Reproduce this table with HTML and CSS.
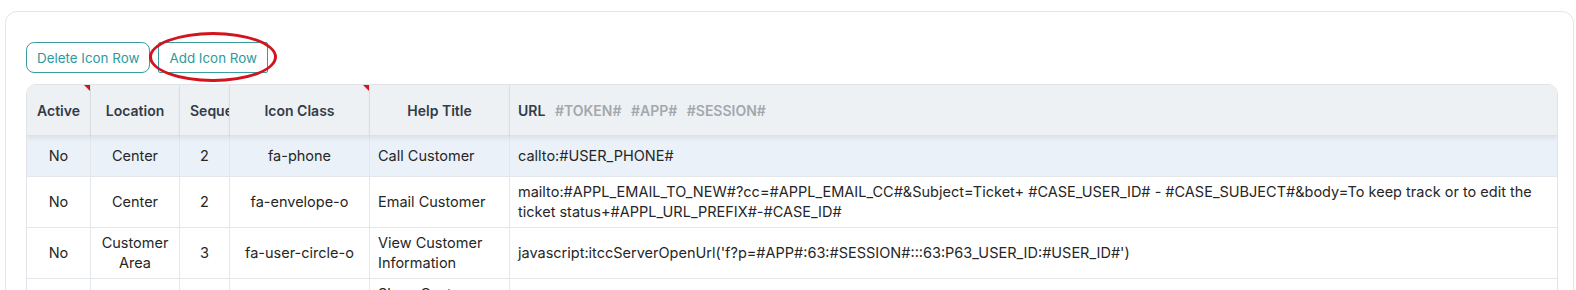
FILE: index.html
```html
<!DOCTYPE html>
<html lang="en">
<head>
<meta charset="utf-8">
<title>Icon Rows</title>
<link rel="stylesheet" href="styles.css">
</head>
<body>
<div class="card">
  <div class="toolbar">
    <button class="btn btn-rounded">Delete Icon Row</button>
    <span class="annotated">
      <button class="btn btn-square">Add Icon Row</button>
      <span class="ring"></span>
    </span>
  </div>
  <div class="grid-wrap">
    <table class="grid">
      <colgroup>
        <col class="c-active">
        <col class="c-loc">
        <col class="c-seq">
        <col class="c-icon">
        <col class="c-help">
        <col class="c-url">
      </colgroup>
      <thead>
        <tr>
          <th class="ctr flag">Active</th>
          <th class="ctr">Location</th>
          <th class="ctr">Sequence</th>
          <th class="ctr flag">Icon Class</th>
          <th class="ctr">Help Title</th>
          <th class="lft">URL <span class="tok">#TOKEN#</span> <span class="tok">#APP#</span> <span class="tok">#SESSION#</span></th>
        </tr>
      </thead>
      <tbody>
        <tr class="sel">
          <td class="ctr">No</td>
          <td class="ctr">Center</td>
          <td class="ctr">2</td>
          <td class="ctr">fa-phone</td>
          <td>Call Customer</td>
          <td>callto:#USER_PHONE#</td>
        </tr>
        <tr>
          <td class="ctr">No</td>
          <td class="ctr">Center</td>
          <td class="ctr">2</td>
          <td class="ctr">fa-envelope-o</td>
          <td>Email Customer</td>
          <td>mailto:#APPL_EMAIL_TO_NEW#?cc=#APPL_EMAIL_CC#&amp;Subject=Ticket+ #CASE_USER_ID# - #CASE_SUBJECT#&amp;body=To keep track or to edit the ticket status+#APPL_URL_PREFIX#-#CASE_ID#</td>
        </tr>
        <tr>
          <td class="ctr">No</td>
          <td class="ctr">Customer Area</td>
          <td class="ctr">3</td>
          <td class="ctr">fa-user-circle-o</td>
          <td>View Customer Information</td>
          <td>javascript:itccServerOpenUrl('f?p=#APP#:63:#SESSION#:::63:P63_USER_ID:#USER_ID#')</td>
        </tr>
        <tr>
          <td class="ctr">No</td>
          <td class="ctr">Center</td>
          <td class="ctr">4</td>
          <td class="ctr">fa-history</td>
          <td>Show Customer History</td>
          <td>javascript:itccServerOpenUrl('f?p=#APP#:64:#SESSION#')</td>
        </tr>
      </tbody>
    </table>
  </div>
</div>
</body>
</html>
```
FILE: styles.css
```css
html, body {
  margin: 0;
  padding: 0;
  background: #ffffff;
}
body {
  font-family: Inter, "Noto Sans", Arial, sans-serif;
  color: #262626;
}
.card {
  margin: 11px 2px 0 5px;
  border: 1px solid #e5e5e5;
  border-radius: 12px;
  padding: 30px 15px 0 20px;
  height: 400px;
  box-sizing: border-box;
}
.toolbar {
  display: flex;
  gap: 8px;
  align-items: center;
  margin-bottom: 11px;
}
.btn {
  font-family: inherit;
  font-size: 13.4px;
  color: #2e9a9c;
  background: #ffffff;
  border: 1px solid #3a9ea0;
  height: 31px;
  padding: 0 10px;
  cursor: pointer;
}
.btn-rounded {
  border-radius: 8px;
}
.btn-square {
  border-radius: 2px;
}
.annotated {
  position: relative;
  display: inline-flex;
}
.ring {
  position: absolute;
  left: -9px;
  top: -10px;
  width: 128px;
  height: 50px;
  box-sizing: border-box;
  border: 3px solid #d3141e;
  border-radius: 50%;
  pointer-events: none;
}
.grid-wrap {
  border: 1px solid #e0e3e7;
  border-radius: 10px;
  overflow: hidden;
}
.grid {
  width: 100%;
  table-layout: fixed;
  border-collapse: separate;
  border-spacing: 0;
  font-size: 14.5px;
}
.c-active { width: 64px; }
.c-loc { width: 89px; }
.c-seq { width: 50px; }
.c-icon { width: 140px; }
.c-help { width: 140px; }
.grid th {
  position: relative;
  height: 50px;
  padding: 0 10px;
  background: #eef1f4;
  color: #333b49;
  font-size: 14px;
  font-weight: 600;
  white-space: nowrap;
  overflow: hidden;
  border-right: 1px solid #dfe3e7;
  border-bottom: 1px solid #dde1e6;
  box-shadow: 0 3px 4px rgba(0, 0, 0, 0.06);
  z-index: 1;
}
.grid th:last-child,
.grid td:last-child {
  border-right: none;
}
.grid th.flag::after {
  content: "";
  position: absolute;
  top: 0;
  right: 0;
  width: 0;
  height: 0;
  border-top: 6px solid #d3141e;
  border-left: 6px solid transparent;
}
.grid th.lft {
  text-align: left;
  padding-left: 8px;
}
.tok {
  color: #a3a8ae;
  margin-left: 6px;
}
.grid td {
  height: 40px;
  padding: 5px 8px;
  line-height: 20px;
  border-right: 1px solid #e3e6ea;
  border-bottom: 1px solid #e3e6ea;
  vertical-align: middle;
  text-align: left;
  box-sizing: border-box;
}
.grid td.ctr,
.grid th.ctr {
  text-align: center;
}
.grid tr.sel td {
  background: #eaf1f8;
  height: 41px;
}
```
